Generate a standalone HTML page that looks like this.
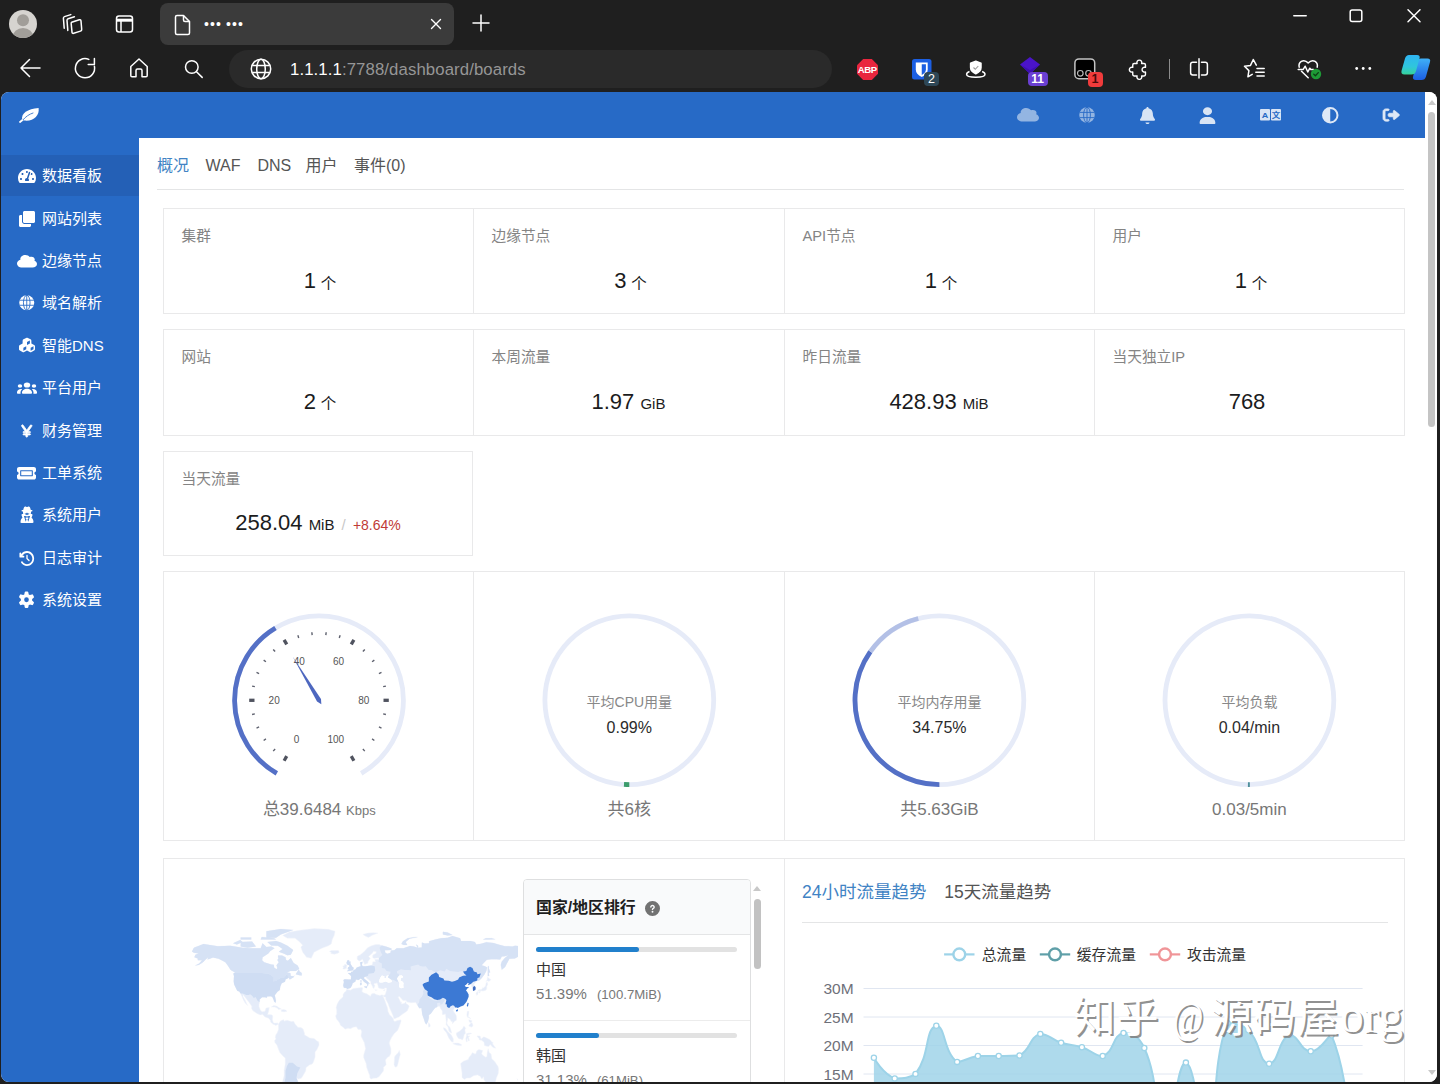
<!DOCTYPE html>
<html lang="zh-CN">
<head>
<meta charset="utf-8">
<title>••• •••</title>
<style>
*{box-sizing:border-box;margin:0;padding:0}
html,body{width:1440px;height:1084px;overflow:hidden;background:#1f1f1f}
body{position:relative;font-family:"Liberation Sans","Noto Sans CJK SC",sans-serif;color:#222;font-size:14px}
.abs{position:absolute}
svg{display:block;overflow:visible}
/* ---------- browser chrome ---------- */
#chrome{position:absolute;left:0;top:0;width:1440px;height:92px;background:#1f1f1f}
#tab{position:absolute;left:159.5px;top:3px;width:294.5px;height:42px;border-radius:8px;background:#3b3b3b}
#addr{position:absolute;left:229px;top:50px;width:603px;height:38px;border-radius:19px;background:#2a2a2a}
#url{position:absolute;left:290px;top:58.8px;font-size:16.75px;line-height:22px;color:#969696;letter-spacing:0.1px;white-space:nowrap}
#url b{font-weight:normal;color:#fff}
.ci{position:absolute}
.badge{position:absolute;color:#fff;font-size:12px;line-height:14px;text-align:center;border-radius:4px;font-weight:bold}
/* ---------- page ---------- */
#page{position:absolute;left:1px;top:92px;width:1436px;height:990px;border-radius:8px;background:#fff;overflow:hidden}
#topbar{position:absolute;left:0;top:0;width:1424px;height:46px;background:#276ac6}
#side{position:absolute;left:0;top:46px;width:138px;height:944px;background:#276ac6}
#side .act{position:absolute;left:0;top:16.5px;width:138px;height:41.7px;background:#2460b6}
.mi{position:absolute;left:41px;font-size:15px;line-height:20px;color:#fff;white-space:nowrap}
.mic{position:absolute;fill:#fff}
#sb{position:absolute;left:1424px;top:0;width:12px;height:990px;background:#fff}
#sb i{position:absolute;left:3px;top:19.5px;width:7px;height:315px;border-radius:4px;background:#c4c4c4}
#sb b{position:absolute;left:2.5px;width:0;height:0;border-left:4px solid transparent;border-right:4px solid transparent}
#sb .up{top:8px;border-bottom:5px solid #c8c8c8}
#sb .dn{top:978px;border-top:5px solid #c8c8c8}
#main{position:absolute;left:138px;top:46px;width:1286px;height:944px;background:#fff;overflow:hidden}
.tabs{position:absolute;left:18px;top:16px;font-size:16px;line-height:24px;color:#555;white-space:nowrap}
.tabs span{position:absolute;top:0}
.hr{position:absolute;height:1px;background:#e4e5e6}
.box{position:absolute;border:1px solid #e9e9ea;background:#fff}
.vl{position:absolute;width:1px;background:#e9e9ea}
.lab{position:absolute;font-size:14.7px;line-height:20px;color:#848484;white-space:nowrap}
.val{position:absolute;text-align:center;font-size:22px;line-height:28px;color:#1b1c1d;white-space:nowrap}
.val small{font-size:15px}
.val .ge{font-size:15.5px;position:relative;top:0.5px}
.val .sl{font-size:15px;color:#c8c8c8;margin:0 1px}
.val .up{font-size:14px;color:#bf3a36}

.rank{position:absolute;border:1px solid #dedfe0;border-radius:4px;background:#fff;overflow:hidden}
.rank .rh{position:absolute;left:0;top:0;width:100%;height:55px;background:#f9fafb;border-bottom:1px solid #e4e5e6}
.rank .rh span{position:absolute;left:12px;top:17px;font-size:15.9px;line-height:22px;font-weight:bold;color:#1f1f1f;white-space:nowrap}
.rank .rr{position:absolute;left:0;width:100%;height:87px;border-top:1px solid #ececec}
.rank .rr:nth-child(3){border-top:none}
.rank .bar{position:absolute;left:12px;top:12px;width:201px;height:5px;border-radius:3px;background:#e2e2e2}
.rank .bar b{position:absolute;left:0;top:0;height:5px;border-radius:3px;background:#2180cc}
.rank .cn{position:absolute;left:12px;top:24.5px;font-size:15px;line-height:20px;color:#333}
.rank .pc{position:absolute;left:12px;top:49px;font-size:15px;line-height:20px;color:#777;white-space:nowrap}
.rank .pc small{font-size:13.2px;margin-left:10px;color:#777}
.isb{position:absolute;width:12px;height:260px}
.isb i{position:absolute;left:2px;top:20px;width:7px;height:70px;border-radius:4px;background:#c2c2c2}
.ctab{position:absolute;font-size:17.5px;line-height:24px;color:#555;white-space:nowrap}
.wm{position:absolute;font-family:"Liberation Serif","Noto Sans CJK SC",sans-serif;font-weight:400;font-size:42px;line-height:50px;color:#fff;text-shadow:2px 2px .6px rgba(125,125,125,.85);white-space:nowrap;letter-spacing:1.1px}
.wm .at{font-size:37px;margin-right:4px;display:inline-block;transform:scale(.9,1.22);transform-origin:50% 75%}
.wm .org{font-size:48px;letter-spacing:0}
</style>
</head>
<body>
<div id="chrome">
  <div id="tab"></div>
  <div id="addr"></div>
  <div id="url"><b>1.1.1.1</b>:7788/dashboard/boards</div>
  <!-- avatar -->
  <svg class="ci" style="left:9px;top:10px" width="28" height="28" viewBox="0 0 28 28"><defs><clipPath id="avc"><circle cx="14" cy="14" r="14"/></clipPath></defs><circle cx="14" cy="14" r="14" fill="#d6d4d0"/><g clip-path="url(#avc)" fill="#a19e99"><circle cx="14" cy="10.2" r="6"/><ellipse cx="14" cy="27.5" rx="10.5" ry="9.5"/></g></svg>
  <!-- workspaces -->
  <svg class="ci" style="left:61px;top:12px" width="24" height="24" viewBox="0 0 24 24" fill="none" stroke="#fff" stroke-width="1.5" stroke-linejoin="round" stroke-linecap="round"><path d="M3.2 16.2 L2.4 6.3 Q2.3 5 3.5 4.6 L9.8 2.6"/><path d="M6.8 18.4 L6 8.4 Q5.900 7.100 7.100 6.700 L13.400 4.700"/><path d="M10.700 10.300 L18.300 7.800 Q19.900 7.300 20 9 L20.700 17.300 Q20.800 18.700 19.500 19.100 L12.700 21.300 Q11.100 21.800 11 20.100 L10.200 11.700 Q10.100 10.500 10.700 10.300Z"/></svg>
  <!-- tab actions -->
  <svg class="ci" style="left:115px;top:14px" width="19" height="20" viewBox="0 0 19 20" fill="none" stroke="#fff" stroke-width="1.5"><rect x="1.5" y="2" width="16" height="16" rx="2.5"/><path d="M1.5 6.200H17.500" stroke-width="3"/><path d="M6 6V18"/></svg>
  <!-- page icon -->
  <svg class="ci" style="left:174px;top:14px" width="17" height="22" viewBox="0 0 17 22" fill="none" stroke="#fff" stroke-width="1.5" stroke-linejoin="round"><path d="M3 1.500H9.500L15.500 7.500V19Q15.500 20.500 14 20.500H3Q1.500 20.500 1.500 19V3Q1.500 1.500 3 1.500Z"/><path d="M9.500 1.500V6Q9.500 7.500 11 7.500H15.500"/></svg>
  <div class="ci" style="left:204px;top:12px;width:44px;height:24px;color:#fff;font-size:14px;line-height:24px;letter-spacing:1.1px;word-spacing:-1px;white-space:nowrap">••• •••</div>
  <!-- close x -->
  <svg class="ci" style="left:430px;top:18px" width="12" height="12" viewBox="0 0 12 12" stroke="#fff" stroke-width="1.400" stroke-linecap="round"><path d="M1.500 1.500L10.500 10.500M10.500 1.500L1.500 10.500"/></svg>
  <!-- plus -->
  <svg class="ci" style="left:472px;top:14px" width="18" height="18" viewBox="0 0 18 18" stroke="#fff" stroke-width="1.500" stroke-linecap="round"><path d="M9 1V17M1 9H17"/></svg>
  <!-- window controls -->
  <svg class="ci" style="left:1293px;top:9px" width="14" height="14" viewBox="0 0 14 14" stroke="#fff" stroke-width="1.500" stroke-linecap="round"><path d="M.8 6.800H13.200"/></svg>
  <svg class="ci" style="left:1349px;top:9px" width="14" height="14" viewBox="0 0 14 14" fill="none" stroke="#fff" stroke-width="1.500"><rect x="1.200" y="1" width="11.600" height="11.600" rx="2"/></svg>
  <svg class="ci" style="left:1407px;top:9px" width="14" height="14" viewBox="0 0 14 14" stroke="#fff" stroke-width="1.500" stroke-linecap="round"><path d="M1 .8L13 12.800M13 .8L1 12.800"/></svg>
  <!-- nav -->
  <svg class="ci" style="left:19px;top:57px" width="22" height="22" viewBox="0 0 22 22" fill="none" stroke="#fff" stroke-width="1.500" stroke-linecap="round" stroke-linejoin="round"><path d="M21 11H2M10.500 2.500L2 11L10.500 19.500"/></svg>
  <svg class="ci" style="left:74px;top:57px" width="22" height="22" viewBox="0 0 22 22" fill="none" stroke="#fff" stroke-width="1.500" stroke-linecap="round" stroke-linejoin="round"><path d="M20.400 9.200A9.600 9.600 0 1 1 14.800 2.400"/><path d="M14.200 7.600H20.400V1.400"/></svg>
  <svg class="ci" style="left:129px;top:57px" width="20" height="22" viewBox="0 0 20 22" fill="none" stroke="#fff" stroke-width="1.500" stroke-linejoin="round"><path d="M1.800 9.500L10 2L18.200 9.500V18.500Q18.200 19.800 17 19.800H13V13.500Q13 12 11.500 12H8.500Q7 12 7 13.500V19.800H3Q1.800 19.800 1.800 18.500Z"/></svg>
  <svg class="ci" style="left:184px;top:59px" width="20" height="20" viewBox="0 0 20 20" fill="none" stroke="#fff" stroke-width="1.500" stroke-linecap="round"><circle cx="7.800" cy="8" r="6.300"/><path d="M12.500 12.700L18.200 18.400"/></svg>
  <svg class="ci" style="left:250px;top:58px" width="22" height="22" viewBox="0 0 22 22" fill="none" stroke="#fff" stroke-width="1.500"><circle cx="11" cy="11" r="9.700"/><ellipse cx="11" cy="11" rx="4.300" ry="9.700"/><path d="M2.200 7.500H19.800M2.200 14.500H19.800"/></svg>
  <!-- ABP -->
  <svg class="ci" style="left:856.500px;top:58.500px" width="21" height="21" viewBox="0 0 21 21"><path d="M6.200 0H14.800L21 6.200V14.800L14.800 21H6.200L0 14.800V6.200Z" fill="#e9263e"/><text x="10.300" y="14" font-size="9.600" font-weight="bold" fill="#fff" text-anchor="middle" font-family="Liberation Sans, sans-serif" letter-spacing="-.4">ABP</text></svg>
  <!-- bitwarden -->
  <svg class="ci" style="left:911.500px;top:58.500px" width="20" height="21" viewBox="0 0 20 21"><rect x="0" y="0" width="19.500" height="20.500" rx="2.500" fill="#1c5fe2"/><path d="M3.800 3.500H15.700V10.500Q15.700 15 9.750 18Q3.800 15 3.800 10.500Z" fill="#fff"/><path d="M9.750 5.300H13.900V10.500Q13.900 13.600 9.750 16Z" fill="#1c5fe2"/></svg>
  <div class="badge" style="left:924px;top:71.500px;width:15px;height:14.500px;background:#2e4756;font-weight:normal;font-size:12.500px;line-height:14.500px">2</div>
  <!-- shield ring -->
  <svg class="ci" style="left:964px;top:58px" width="24" height="22" viewBox="0 0 24 22" fill="none" stroke="#fff" stroke-width="1.500"><path d="M11.800 3.200L17 5.200V9.500Q17 13.500 11.800 15.800Q6.600 13.500 6.600 9.500V5.200Z" fill="#fff" stroke-linejoin="round"/><path d="M9.500 9.500L11.300 11.300L14.300 8" stroke="#9a9a9a" stroke-width="1.100"/><path d="M5.500 13.500Q2.600 14.600 2.600 16.200Q2.600 19.200 11.800 19.200Q21 19.200 21 16.200Q21 14.600 18.100 13.500"/></svg>
  <!-- purple diamond -->
  <svg class="ci" style="left:1019px;top:56px" width="22" height="20" viewBox="0 0 22 20"><path d="M11 1L21 8.500L11 18L1 8.500Z" fill="#4a14c8"/><path d="M1 8.500L11 14L21 8.500L11 18Z" fill="#3d0fb0"/></svg>
  <div class="badge" style="left:1027.500px;top:72px;width:20px;height:14px;background:#6a3fd2;font-size:12px;line-height:14px">11</div>
  <!-- black square ext -->
  <svg class="ci" style="left:1074px;top:58px" width="22" height="22" viewBox="0 0 22 22" fill="none"><rect x=".9" y=".9" width="19.800" height="19.800" rx="4" fill="#000" stroke="#c4c4c4" stroke-width="1.500"/><circle cx="6.300" cy="15.300" r="2.800" stroke="#b8b8b8" stroke-width="1.200"/><circle cx="14.500" cy="15.300" r="2.800" stroke="#b8b8b8" stroke-width="1.200"/></svg>
  <div class="badge" style="left:1087.500px;top:72px;width:15px;height:14.500px;background:#f03b3b;color:#4a0a0a;font-size:12.500px;line-height:14.500px">1</div>
  <!-- puzzle -->
  <svg class="ci" style="left:1128.300px;top:58.600px" width="20.800" height="21.700" viewBox="0 0 22 23" fill="none" stroke="#fff" stroke-width="1.500" stroke-linejoin="round"><path d="M6.500 4.800H9.600A2.600 2.600 0 1 1 14.400 4.800H17Q18.500 4.800 18.500 6.300V8.900A2.600 2.600 0 1 0 18.500 13.700V16.500Q18.500 18 17 18H14.400A2.600 2.600 0 1 1 9.600 18H6.500Q5 18 5 16.500V13.700A2.600 2.600 0 1 1 5 8.900V6.300Q5 4.800 6.500 4.800Z"/></svg>
  <div class="ci" style="left:1168.500px;top:59px;width:1px;height:20px;background:#8c8c8c"></div>
  <!-- split -->
  <svg class="ci" style="left:1188px;top:57px" width="22" height="22" viewBox="0 0 22 22" fill="none" stroke="#fff" stroke-width="1.500" stroke-linecap="round"><path d="M8.500 5.200H4.800Q2.600 5.200 2.600 7.400V15.800Q2.600 18 4.800 18H8.500M13.500 5.200H17.200Q19.400 5.200 19.400 7.400V15.800Q19.400 18 17.200 18H13.500M11 1.800V21"/></svg>
  <!-- favorites -->
  <svg class="ci" style="left:1243px;top:57px" width="23" height="23" viewBox="0 0 23 23" fill="none" stroke="#fff" stroke-width="1.500" stroke-linecap="round" stroke-linejoin="round"><path d="M13.300 8.200L10.300 2.500L7.500 8.400L1.500 9.300L5.900 13.600L4.900 19.800L9.200 17.400"/><path d="M14 11.400H21.200M12.800 15.200H21.200M14 19H21.200"/></svg>
  <!-- heart -->
  <svg class="ci" style="left:1297px;top:58px" width="24" height="22" viewBox="0 0 24 22" fill="none" stroke="#fff" stroke-width="1.500" stroke-linecap="round" stroke-linejoin="round"><path d="M2.200 9.200Q1.300 5.200 4.300 3.300Q8 1.400 11.200 5Q14.400 1.400 18.100 3.300Q21.100 5.200 20.200 9.200M4.500 13.200L11.200 19.800"/><path d="M1.200 11.400H6.200L8.200 8.200L10.800 14L12.800 10.200L13.800 11.400H16.500"/><circle cx="19" cy="16" r="5.200" fill="#1e9a36" stroke="none"/><path d="M16.700 16.100L18.400 17.800L21.300 14.600" stroke="#0c3d14" stroke-width="1.300"/></svg>
  <svg class="ci" style="left:1354px;top:66px" width="18" height="5" viewBox="0 0 18 5" fill="#fff"><circle cx="2.700" cy="2.500" r="1.400"/><circle cx="9.200" cy="2.500" r="1.400"/><circle cx="15.800" cy="2.500" r="1.400"/></svg>
  <!-- copilot -->
  <svg class="ci" style="left:1400px;top:54px" width="32" height="28" viewBox="0 0 32 28"><defs><linearGradient id="cp1" x1="0" y1="0" x2="0" y2="1"><stop offset="0" stop-color="#2fb4f2"/><stop offset=".6" stop-color="#2fc6dc"/><stop offset="1" stop-color="#36d39a"/></linearGradient><linearGradient id="cp2" x1="0" y1="0" x2="0" y2="1"><stop offset="0" stop-color="#3fb0f7"/><stop offset="1" stop-color="#1c5fe4"/></linearGradient></defs><path d="M14.500 2.500H21Q24.500 2.500 23.500 6L19.500 20.500Q18.500 24 15 24H9.500Q5.500 24 6.700 20L10.500 6Q11.500 2.500 14.500 2.500Z" fill="url(#cp2)" transform="translate(6.500 2)"/><path d="M9 1H17Q20.500 1 19.500 4.500L16 17Q15 20.500 11.500 20.500H4.500Q.5 20.500 1.600 16.500L5 4.500Q6 1 9 1Z" fill="url(#cp1)"/></svg>
</div>
<div id="page">
<div id="topbar">
<svg class="abs" style="left:18.2px;top:14.799999999999997px" width="20.500" height="16" viewBox="0 0 20.500 16"><path d="M3.200 12.600C1.800 6.500 8.500 1.800 19.600 1C20.800 8.600 14.200 14.800 5.200 13.600Z" fill="#fff"/><path d="M1 15L3.800 12.800" stroke="#fff" stroke-width="1.800" stroke-linecap="round"/><path d="M4 12.800C7 9.500 10 7.300 14 6" stroke="#4b83d0" stroke-width="1" fill="none" stroke-linecap="round"/></svg>
<svg class="abs" style="left:1015.5px;top:15.2px" width="22" height="15.5" viewBox="0 0 576 512" preserveAspectRatio="none" opacity="0.5"><path fill="#fff" d="M0 336c0 79.5 64.5 144 144 144h304c70.7 0 128-57.3 128-128 0-51.6-30.5-96.1-74.5-116.3 6.7-13.1 10.5-28 10.5-43.7 0-53-43-96-96-96-17.7 0-34.2 4.8-48.4 13.1C343.5 63.3 295.4 32 240 32 160.5 32 96 96.5 96 176c0 8 .7 15.9 1.9 23.5C41 218.7 0 272.6 0 336"/></svg>
<svg class="abs" style="left:1078.0px;top:15.0px" width="16" height="16" viewBox="-8 -8 16 16" opacity="0.5"><circle r="7.750" fill="#fff"/><g fill="none" stroke="#276ac6" stroke-width=".9"><ellipse rx="3.400" ry="7.750"/><path d="M0 -8V8M-7.400 -2.600H7.400M-7.400 2.600H7.400"/></g></svg>
<svg class="abs" style="left:1138.5px;top:14.5px" width="15" height="17" viewBox="0 0 448 512" preserveAspectRatio="none" opacity="0.82"><path fill="#fff" d="M224 0c-17.7 0-32 14.3-32 32v3.2C119 50 64 114.6 64 192v21.7c0 48.1-16.4 94.8-46.4 132.4l-9.8 12.2C2.7 364.6 0 372.4 0 380.5 0 400.1 15.9 416 35.5 416h376.9c19.6 0 35.5-15.9 35.5-35.5 0-8.1-2.7-15.9-7.8-22.2l-9.8-12.2c-29.9-37.6-46.3-84.3-46.3-132.4V192c0-77.4-55-142-128-156.8V32c0-17.7-14.3-32-32-32m-62 464c7.1 27.6 32.2 48 62 48s54.9-20.4 62-48z"/></svg>
<svg class="abs" style="left:1197.5px;top:14.5px" width="17" height="17" viewBox="0 0 448 512" preserveAspectRatio="none" opacity="0.82"><path fill="#fff" d="M224 248a120 120 0 1 0 0-240 120 120 0 1 0 0 240m-29.7 56C95.8 304 16 383.8 16 482.3c0 16.4 13.3 29.7 29.7 29.7h356.6c16.4 0 29.7-13.3 29.7-29.7 0-98.5-79.8-178.3-178.3-178.3z"/></svg>
<svg class="abs" style="left:1258.5px;top:17.3px" width="21" height="11.5" viewBox="0 0 21 13" preserveAspectRatio="none"><rect x="0" y="0" width="10" height="13" rx="1" fill="#fff" opacity=".82"/><rect x="11" y="0" width="10" height="13" rx="1" fill="#fff" opacity=".82"/><text x="5" y="10" font-size="9" font-weight="bold" text-anchor="middle" fill="#276ac6" font-family="Liberation Sans, sans-serif">A</text><text x="16" y="10.2" font-size="8.5" text-anchor="middle" fill="#276ac6" font-family="Liberation Sans, Noto Sans CJK SC, sans-serif" font-weight="bold">文</text></svg>
<svg class="abs" style="left:1320.8px;top:14.8px" width="16.5" height="16.5" viewBox="0 0 512 512" preserveAspectRatio="none" opacity="0.85"><path fill="#fff" d="M448 256c0-106-86-192-192-192v384c106 0 192-86 192-192M0 256a256 256 0 1 1 512 0 256 256 0 1 1-512 0"/></svg>
<svg class="abs" style="left:1382.3px;top:16.0px" width="16.500" height="14" viewBox="0 0 512 512" preserveAspectRatio="none" opacity=".85"><path fill="#fff" stroke="#fff" stroke-width="26" stroke-linejoin="round" d="M505 273c9.4-9.4 9.4-24.6 0-33.9L361 95c-6.9-6.9-17.2-8.9-26.2-5.2S320 102.3 320 112v80H208c-26.5 0-48 21.5-48 48v32c0 26.5 21.5 48 48 48h112v80c0 9.7 5.8 18.5 14.8 22.2s19.3 1.7 26.2-5.2zM160 96c17.7 0 32-14.3 32-32s-14.3-32-32-32H96C43 32 0 75 0 128v256c0 53 43 96 96 96h64c17.7 0 32-14.3 32-32s-14.3-32-32-32H96c-17.7 0-32-14.3-32-32V128c0-17.7 14.3-32 32-32z"/></svg>
</div>
<div id="side"><div class="act"></div>
<svg class="abs" style="left:16.5px;top:30.0px" width="18" height="16" viewBox="0 0 576 512" preserveAspectRatio="none"><path fill="#fff" d="M288 32C128.94 32 0 160.94 0 320c0 52.8 14.25 102.26 39.06 144.8 5.61 9.62 16.3 15.2 27.44 15.2h443c11.14 0 21.83-5.58 27.44-15.2C561.75 422.26 576 372.8 576 320c0-159.06-128.94-288-288-288zm0 64c14.71 0 26.58 10.13 30.32 23.65-1.11 2.26-2.64 4.23-3.45 6.67l-9.22 27.67c-5.13 3.49-10.97 6.01-17.64 6.01-17.67 0-32-14.33-32-32S270.33 96 288 96zM96 384c-17.67 0-32-14.33-32-32s14.33-32 32-32 32 14.33 32 32-14.33 32-32 32zm48-160c-17.67 0-32-14.33-32-32s14.33-32 32-32 32 14.33 32 32-14.33 32-32 32zm246.77-72.41l-61.33 184C343.13 347.33 352 364.54 352 384c0 11.72-3.38 22.55-8.88 32H232.88c-5.5-9.45-8.88-20.28-8.88-32 0-33.94 26.5-61.43 59.9-63.59l61.34-184.01c4.17-12.56 17.73-19.45 30.36-15.17 12.57 4.19 19.35 17.79 15.17 30.36zm14.66 57.2l15.52-46.55c3.47-1.29 7.13-2.23 11.05-2.23 17.67 0 32 14.33 32 32s-14.33 32-32 32c-11.38-.01-20.89-6.28-26.57-15.22zM480 384c-17.67 0-32-14.33-32-32s14.33-32 32-32 32 14.33 32 32-14.33 32-32 32z"/></svg>
<div class="mi" style="top:28.4px">数据看板</div>
<svg class="abs" style="left:18.0px;top:72.5px" width="16" height="16" viewBox="0 0 512 512"><path fill="#fff" d="M464 0c26.51 0 48 21.49 48 48v288c0 26.51-21.49 48-48 48H176c-26.51 0-48-21.49-48-48V48c0-26.51 21.49-48 48-48h288M176 416c-44.112 0-80-35.888-80-80V128H48c-26.51 0-48 21.49-48 48v288c0 26.51 21.49 48 48 48h288c26.51 0 48-21.49 48-48v-48H176z"/></svg>
<div class="mi" style="top:70.9px">网站列表</div>
<svg class="abs" style="left:16.0px;top:115.8px" width="20" height="14.5" viewBox="0 0 576 512" preserveAspectRatio="none"><path fill="#fff" d="M0 336c0 79.5 64.5 144 144 144h304c70.7 0 128-57.3 128-128 0-51.6-30.5-96.1-74.5-116.3 6.7-13.1 10.5-28 10.5-43.7 0-53-43-96-96-96-17.7 0-34.2 4.8-48.4 13.1C343.5 63.3 295.4 32 240 32 160.5 32 96 96.5 96 176c0 8 .7 15.9 1.9 23.5C41 218.7 0 272.6 0 336"/></svg>
<div class="mi" style="top:113.4px">边缘节点</div>
<svg class="abs" style="left:17.8px;top:157.2px" width="15.5" height="15.5" viewBox="-8 -8 16 16"><circle r="7.750" fill="#fff"/><g fill="none" stroke="#276ac6" stroke-width=".9"><ellipse rx="3.400" ry="7.750"/><path d="M0 -8V8M-7.400 -2.600H7.400M-7.400 2.600H7.400"/></g></svg>
<div class="mi" style="top:155.4px">域名解析</div>
<svg class="abs" style="left:18.0px;top:200.2px" width="16" height="14.5" viewBox="0 0 512 512" preserveAspectRatio="none"><path fill="#fff" d="M284-1.3c-17.3-10-38.7-10-56 0l-84.2 48.6c-17.3 10-28 28.5-28 48.5v101.9l-88.3 51c-17.3 10-28 28.5-28 48.5v97.3c0 20 10.7 38.5 28 48.5l84.3 48.6c17.3 10 38.7 10 56 0l88.3-51 88.3 51c17.3 10 38.7 10 56 0l84.1-48.6c17.3-10 28-28.5 28-48.5v-97.3c0-20-10.7-38.5-28-48.5l-88.3-51V95.8c0-20-10.7-38.5-28-48.5zm-52 293.9v106.5l-88.3 51c-1.2.7-2.6 1.1-4 1.1V345.9zm231.4.6c.7 1.2 1.1 2.6 1.1 4v97.3c0 2.9-1.5 5.5-4 6.9L376.2 450c-1.2.7-2.6 1.1-4 1.1V345.8zM348.3 95.8v101.9L256 251V144.5l91.2-52.6c.7 1.2 1.1 2.6 1.1 4z"/></svg>
<div class="mi" style="top:197.9px">智能DNS</div>
<svg class="abs" style="left:16.0px;top:243.8px" width="20" height="12.5" viewBox="0 0 640 512" preserveAspectRatio="none"><path fill="#fff" d="M320 16a104 104 0 1 1 0 208 104 104 0 1 1 0-208M96 88a72 72 0 1 1 0 144 72 72 0 1 1 0-144M0 416c0-70.7 57.3-128 128-128 12.8 0 25.2 1.9 36.9 5.4C132 330.2 112 378.8 112 432v16c0 11.4 2.4 22.2 6.7 32H32c-17.7 0-32-14.3-32-32zm521.3 64c4.3-9.8 6.7-20.6 6.7-32v-16c0-53.2-20-101.8-52.9-138.6 11.7-3.5 24.1-5.4 36.9-5.4 70.7 0 128 57.3 128 128v32c0 17.7-14.3 32-32 32zM472 160a72 72 0 1 1 144 0 72 72 0 1 1-144 0M160 432c0-88.4 71.6-160 160-160s160 71.6 160 160v16c0 17.7-14.3 32-32 32H192c-17.7 0-32-14.3-32-32z"/></svg>
<div class="mi" style="top:240.4px">平台用户</div>
<svg class="abs" style="left:19.8px;top:286.0px" width="11.5" height="14" viewBox="0 0 384 512" preserveAspectRatio="none"><path fill="#fff" stroke="#fff" stroke-width="26" d="M74.9 46.7c-9.6-14.9-29.4-19.2-44.2-9.6s-19.2 29.3-9.6 44.2L143.7 272H88c-13.3 0-24 10.7-24 24s10.7 24 24 24h72v32H88c-13.3 0-24 10.7-24 24s10.7 24 24 24h72v48c0 17.7 14.3 32 32 32s32-14.3 32-32v-48h72c13.3 0 24-10.7 24-24s-10.7-24-24-24h-72v-32h72c13.3 0 24-10.7 24-24s-10.7-24-24-24h-55.7L362.9 81.3c9.6-14.9 5.3-34.7-9.6-44.2s-34.7-5.3-44.2 9.6L192 228.8z"/></svg>
<div class="mi" style="top:283.4px">财务管理</div>
<svg class="abs" style="left:16.0px;top:326.8px" width="19" height="16.5" viewBox="0 0 576 512" preserveAspectRatio="none"><path fill="#fff" fill-rule="evenodd" d="M0 128c0-35.3 28.7-64 64-64h448c35.3 0 64 28.7 64 64v64c0 8.8-7.4 15.7-15.7 18.6C541.5 217.1 528 235 528 256s13.5 38.9 32.3 45.4c8.3 2.9 15.7 9.8 15.7 18.6v64c0 35.3-28.7 64-64 64H64c-35.3 0-64-28.7-64-64v-64c0-8.8 7.4-15.7 15.7-18.6C34.5 294.9 48 277 48 256s-13.5-38.9-32.3-45.4C7.4 207.7 0 200.8 0 192zM128 192v128h320V192zM96 176c0-8.8 7.2-16 16-16h352c8.8 0 16 7.200 16 16v160c0 8.800-7.200 16-16 16H112c-8.800 0-16-7.200-16-16z"/></svg>
<div class="mi" style="top:325.4px">工单系统</div>
<svg class="abs" style="left:18.5px;top:369.0px" width="14" height="16" viewBox="0 0 448 512" preserveAspectRatio="none"><path fill="#fff" d="M171-16c-36.4 0-57.8 58.3-68.3 112H72c-13.3 0-24 10.7-24 24s10.7 24 24 24h24v32c0 17 3.3 33.2 9.3 48H75.5C60.3 224 48 236.3 48 251.5c0 3 .5 5.9 1.4 8.7l28.9 86.6C40.2 379.6 16 428.1 16 482.3c0 16.4 13.3 29.7 29.7 29.7h356.6c16.4 0 29.7-13.3 29.7-29.7 0-54.2-24.2-102.7-62.3-135.4l28.9-86.6c.9-2.8 1.4-5.7 1.4-8.7 0-15.2-12.3-27.5-27.5-27.5h-29.8c6-14.8 9.3-31 9.3-48v-32h24c13.3 0 24-10.7 24-24s-10.7-24-24-24h-30.7c-10.4-53.7-31.9-112-68.3-112-9.6 0-19 3.9-27.5 8.2C241.3-3.6 231.1.1 224 .1s-17.3-3.7-25.5-7.8C190-12.1 180.6-16 171-16m93.7 484.4-24.8-70.9 27.9-32.5c2.7-3.2 4.2-7.2 4.2-11.4 0-9.7-7.8-17.5-17.5-17.5h-61c-9.7 0-17.5 7.8-17.5 17.5 0 4.2 1.5 8.2 4.2 11.4l27.9 32.5-24.8 70.9-57-180.4H162c18.4 10.2 39.5 16 62 16s43.6-5.8 62-16h35.7zM224 256c-34.7 0-64.2-22.1-75.3-53 5.7 3.2 12.3 5 19.3 5h12.4c16.5 0 31.1-10.6 36.3-26.2 2.3-7 12.2-7 14.5 0 5.2 15.6 19.9 26.2 36.3 26.2h12.4c7 0 13.6-1.8 19.3-5-11.1 30.9-40.6 53-75.3 53z"/></svg>
<div class="mi" style="top:367.4px">系统用户</div>
<svg class="abs" style="left:17.7px;top:412.5px" width="16" height="15" viewBox="0 0 576 512" preserveAspectRatio="none"><path fill="#fff" d="M288 64c106 0 192 86 192 192s-86 192-192 192c-65.2 0-122.9-32.5-157.6-82.3-10.1-14.5-30.1-18-44.6-7.9s-18 30.1-7.9 44.6C124.1 468.6 201 512 288 512c141.4 0 256-114.6 256-256S429.4 0 288 0C202.3 0 126.5 42.1 80 106.7V80c0-17.7-14.3-32-32-32S16 62.3 16 80v112c0 17.7 14.3 32 32 32h112.1c17.7 0 32-14.3 32-32s-14.3-32-32-32h-38.3C154.9 102.6 217 64 288 64m24 88c0-13.3-10.7-24-24-24s-24 10.7-24 24v104c0 6.4 2.5 12.5 7 17l72 72c9.4 9.4 24.6 9.4 33.9 0s9.4-24.6 0-33.9l-65-65V152z"/></svg>
<div class="mi" style="top:410.4px">日志审计</div>
<svg class="abs" style="left:18.2px;top:454.2px" width="15" height="15.5" viewBox="0 0 512 512" preserveAspectRatio="none"><path fill="#fff" d="M195.1 9.5c3-14.8 16.1-25.5 31.3-25.5h59.8c15.2 0 28.3 10.7 31.3 25.5l14.5 70c14.1 6 27.3 13.7 39.3 22.8l67.8-22.5c14.4-4.8 30.2 1.2 37.8 14.4l29.9 51.8c7.6 13.2 4.9 29.8-6.5 39.9L447 233.3c.9 7.4 1.3 15 1.3 22.7s-.5 15.3-1.3 22.7l53.4 47.5c11.4 10.1 14 26.8 6.5 39.9L477 417.9c-7.6 13.1-23.4 19.2-37.8 14.4l-67.8-22.5c-12.1 9.1-25.3 16.7-39.3 22.8l-14.4 69.9c-3.1 14.9-16.2 25.5-31.3 25.5h-59.8c-15.2 0-28.3-10.7-31.3-25.5l-14.4-69.9c-14.1-6-27.2-13.7-39.3-22.8l-68.1 22.5c-14.4 4.8-30.2-1.2-37.8-14.4L5.8 366.1c-7.6-13.2-4.9-29.8 6.5-39.9l53.4-47.5c-.9-7.4-1.3-15-1.3-22.7s.5-15.3 1.3-22.7l-53.4-47.5C.9 175.7-1.7 159 5.8 145.9l29.9-51.8c7.6-13.2 23.4-19.2 37.8-14.4l67.8 22.5c12.1-9.1 25.3-16.7 39.3-22.8zM256.3 336a80 80 0 1 0-.6-160 80 80 0 1 0 .6 160"/></svg>
<div class="mi" style="top:452.4px">系统设置</div>
</div>
<div id="main">
<div class="tabs">
<span style="left:0.0px;color:#4183c4">概况</span>
<span style="left:48.5px">WAF</span>
<span style="left:100.5px">DNS</span>
<span style="left:148.5px">用户</span>
<span style="left:197.0px">事件(0)</span>
</div>
<div class="hr" style="left:18px;top:51px;width:1247px"></div>
<div class="box" style="left:24.0px;top:70.0px;width:1242.0px;height:106.0px"></div>
<div class="box" style="left:24.0px;top:191.0px;width:1242.0px;height:107.0px"></div>
<div class="box" style="left:24.0px;top:313.0px;width:310.0px;height:105.0px"></div>
<div class="vl" style="left:334.0px;top:71.0px;height:104.0px"></div>
<div class="vl" style="left:645.0px;top:71.0px;height:104.0px"></div>
<div class="vl" style="left:955.0px;top:71.0px;height:104.0px"></div>
<div class="vl" style="left:334.0px;top:192.0px;height:105.0px"></div>
<div class="vl" style="left:645.0px;top:192.0px;height:105.0px"></div>
<div class="vl" style="left:955.0px;top:192.0px;height:105.0px"></div>
<div class="lab" style="left:42.5px;top:87.5px">集群</div>
<div class="val" style="left:24.0px;width:310.0px;top:129.0px;padding-left:4px;word-spacing:-1.5px">1 <span class="ge">个</span></div>
<div class="lab" style="left:352.5px;top:87.5px">边缘节点</div>
<div class="val" style="left:334.0px;width:311.0px;top:129.0px;padding-left:4px;word-spacing:-1.5px">3 <span class="ge">个</span></div>
<div class="lab" style="left:663.5px;top:87.5px">API节点</div>
<div class="val" style="left:645.0px;width:310.0px;top:129.0px;padding-left:4px;word-spacing:-1.5px">1 <span class="ge">个</span></div>
<div class="lab" style="left:973.5px;top:87.5px">用户</div>
<div class="val" style="left:955.0px;width:310.0px;top:129.0px;padding-left:4px;word-spacing:-1.5px">1 <span class="ge">个</span></div>
<div class="lab" style="left:42.5px;top:209.0px">网站</div>
<div class="val" style="left:24.0px;width:310.0px;top:249.5px;padding-left:4px;word-spacing:-1.5px">2 <span class="ge">个</span></div>
<div class="lab" style="left:352.5px;top:209.0px">本周流量</div>
<div class="val" style="left:334.0px;width:311.0px;top:249.5px">1.97 <small>GiB</small></div>
<div class="lab" style="left:663.5px;top:209.0px">昨日流量</div>
<div class="val" style="left:645.0px;width:310.0px;top:249.5px">428.93 <small>MiB</small></div>
<div class="lab" style="left:973.5px;top:209.0px">当天独立IP</div>
<div class="val" style="left:955.0px;width:310.0px;top:249.5px;padding-right:4px">768</div>
<div class="lab" style="left:42.5px;top:331.0px">当天流量</div>
<div class="val" style="left:24.0px;width:310.0px;top:370.5px">258.04 <small>MiB</small> <span class="sl">/</span> <span class="up">+8.64%</span></div>
<div class="box" style="left:24.0px;top:433.0px;width:1242.0px;height:270.0px"></div>
<div class="vl" style="left:334.0px;top:434.0px;height:268.0px"></div>
<div class="vl" style="left:645.0px;top:434.0px;height:268.0px"></div>
<div class="vl" style="left:955.0px;top:434.0px;height:268.0px"></div>
<svg class="abs" style="left:24.0px;top:433.0px" width="1241.0" height="269.0" viewBox="163.0 571 1241.0 269.0" font-family="Liberation Sans, Noto Sans CJK SC, sans-serif">
<path d="M276.80 773.39A84.4 84.4 0 1 1 361.20 773.39" fill="none" stroke="#e6ebf8" stroke-width="4.8" stroke-linecap="butt"/>
<path d="M276.80 773.39A84.4 84.4 0 0 1 275.46 628.00" fill="none" stroke="#5470c6" stroke-width="4.8" stroke-linecap="butt"/>
<path d="M286.75 756.16L284.10 760.75" stroke="#50535f" stroke-width="3.3"/>
<path d="M275.11 749.05L273.23 751.13" stroke="#5e616e" stroke-width="1.4"/>
<path d="M265.93 738.86L263.66 740.50" stroke="#5e616e" stroke-width="1.4"/>
<path d="M259.07 726.98L256.51 728.12" stroke="#5e616e" stroke-width="1.4"/>
<path d="M254.83 713.94L252.09 714.52" stroke="#5e616e" stroke-width="1.4"/>
<path d="M254.50 700.30L249.20 700.30" stroke="#50535f" stroke-width="3.3"/>
<path d="M254.83 686.66L252.09 686.08" stroke="#5e616e" stroke-width="1.4"/>
<path d="M259.07 673.62L256.51 672.48" stroke="#5e616e" stroke-width="1.4"/>
<path d="M265.93 661.74L263.66 660.10" stroke="#5e616e" stroke-width="1.4"/>
<path d="M275.11 651.55L273.23 649.47" stroke="#5e616e" stroke-width="1.4"/>
<path d="M286.75 644.44L284.10 639.85" stroke="#50535f" stroke-width="3.3"/>
<path d="M298.73 637.91L297.86 635.25" stroke="#5e616e" stroke-width="1.4"/>
<path d="M312.14 635.06L311.85 632.27" stroke="#5e616e" stroke-width="1.4"/>
<path d="M325.86 635.06L326.15 632.27" stroke="#5e616e" stroke-width="1.4"/>
<path d="M339.27 637.91L340.14 635.25" stroke="#5e616e" stroke-width="1.4"/>
<path d="M351.25 644.44L353.90 639.85" stroke="#50535f" stroke-width="3.3"/>
<path d="M362.89 651.55L364.77 649.47" stroke="#5e616e" stroke-width="1.4"/>
<path d="M372.07 661.74L374.34 660.10" stroke="#5e616e" stroke-width="1.4"/>
<path d="M378.93 673.62L381.49 672.48" stroke="#5e616e" stroke-width="1.4"/>
<path d="M383.17 686.66L385.91 686.08" stroke="#5e616e" stroke-width="1.4"/>
<path d="M383.50 700.30L388.80 700.30" stroke="#50535f" stroke-width="3.3"/>
<path d="M383.17 713.94L385.91 714.52" stroke="#5e616e" stroke-width="1.4"/>
<path d="M378.93 726.98L381.49 728.12" stroke="#5e616e" stroke-width="1.4"/>
<path d="M372.07 738.86L374.34 740.50" stroke="#5e616e" stroke-width="1.4"/>
<path d="M362.89 749.05L364.77 751.13" stroke="#5e616e" stroke-width="1.4"/>
<path d="M351.25 756.16L353.90 760.75" stroke="#50535f" stroke-width="3.3"/>
<text x="293.8" y="742.9" font-size="10" fill="#555" text-anchor="start">0</text>
<text x="268.6" y="703.9" font-size="10" fill="#555" text-anchor="start">20</text>
<text x="293.8" y="664.9" font-size="10" fill="#555" text-anchor="start">40</text>
<text x="344.2" y="664.9" font-size="10" fill="#555" text-anchor="end">60</text>
<text x="369.4" y="703.9" font-size="10" fill="#555" text-anchor="end">80</text>
<text x="344.2" y="742.9" font-size="10" fill="#555" text-anchor="end">100</text>
<path d="M292.79 656.78L317.03 701.49L321.32 704.16L320.97 699.11Z" fill="#4d67bf"/>
<text x="319.3" y="815" font-size="17" fill="#777" text-anchor="middle">总39.6484 <tspan font-size="13">Kbps</tspan></text>
<circle cx="629.3" cy="700.2" r="84.4" fill="none" stroke="#e6ebf8" stroke-width="4.8"/>
<path d="M629.30 784.60A84.4 84.4 0 0 1 624.00 784.43" fill="none" stroke="#3b9c6c" stroke-width="4.8" stroke-linecap="butt"/>
<text x="629.3" y="706.8" font-size="14" fill="#888" text-anchor="middle">平均CPU用量</text>
<text x="629.3" y="732.5" font-size="16" fill="#2b2b2b" text-anchor="middle">0.99%</text>
<text x="629.3" y="815" font-size="17" fill="#777" text-anchor="middle">共6核</text>
<circle cx="939.4" cy="700.2" r="84.4" fill="none" stroke="#e6ebf8" stroke-width="4.8"/>
<path d="M939.40 784.60A84.4 84.4 0 0 1 870.35 651.67" fill="none" stroke="#5470c6" stroke-width="4.8" stroke-linecap="butt"/>
<path d="M870.35 651.67A84.4 84.4 0 0 1 918.27 618.49" fill="none" stroke="#b3c0e6" stroke-width="4.8" stroke-linecap="butt"/>
<text x="939.4" y="706.8" font-size="14" fill="#888" text-anchor="middle">平均内存用量</text>
<text x="939.4" y="732.5" font-size="16" fill="#2b2b2b" text-anchor="middle">34.75%</text>
<text x="939.4" y="815" font-size="17" fill="#777" text-anchor="middle">共5.63GiB</text>
<circle cx="1249.4" cy="700.2" r="84.4" fill="none" stroke="#e6ebf8" stroke-width="4.8"/>
<path d="M1249.84 784.60A84.4 84.4 0 0 1 1247.93 784.59" fill="none" stroke="#4e8f9b" stroke-width="4.8" stroke-linecap="butt"/>
<text x="1249.4" y="706.8" font-size="14" fill="#888" text-anchor="middle">平均负载</text>
<text x="1249.4" y="732.5" font-size="16" fill="#2b2b2b" text-anchor="middle">0.04/min</text>
<text x="1249.4" y="815" font-size="17" fill="#777" text-anchor="middle">0.03/5min</text>
</svg>
<div class="box" style="left:24.0px;top:720.0px;width:1242.0px;height:300px"></div>
<div class="vl" style="left:645.0px;top:721.0px;height:300px"></div>
<svg class="abs" style="left:41px;top:732px;overflow:hidden" width="338" height="214" viewBox="180 870 338 214">
<path d="M192.0 951.5L193.9 947.7L203.5 944.1L217.8 946.3L230.2 945.8L242.6 947.7L249.3 948.3L260.7 948.3L262.6 943.3L266.4 947.1L271.2 946.4L274.5 948.3L270.3 950.9L268.3 953.4L262.6 957.2L262.1 960.2L264.1 962.3L271.2 964.5L273.8 964.8L274.1 967.6L276.5 969.3L277.4 968.1L276.5 965.3L278.8 962.3L277.4 960.0L278.4 958.5L277.9 955.5L282.0 955.5L285.5 957.2L286.0 959.9L287.9 960.7L290.8 958.1L293.6 963.0L297.6 965.5L299.2 968.7L296.0 971.0L290.3 971.0L287.0 972.5L290.3 973.1L290.8 976.1L294.1 976.3L294.6 975.1L293.6 977.2L289.8 979.4L288.9 977.9L288.4 977.9L285.5 979.4L285.0 981.8L281.7 983.2L280.3 986.5L279.8 990.1L277.4 991.8L274.8 995.2L275.9 1000.7L275.5 1002.8L274.3 1001.8L273.4 999.2L272.2 996.7L270.3 996.3L266.9 996.4L267.0 997.8L265.0 997.3L262.1 997.3L259.6 999.6L259.6 1001.9L259.1 1004.3L259.0 1006.5L260.5 1010.3L262.1 1011.7L265.0 1011.3L266.0 1008.1L269.3 1007.5L268.6 1011.6L267.6 1014.6L271.7 1014.7L272.8 1015.8L272.5 1020.2L273.6 1023.1L276.0 1023.1L277.4 1022.9L278.6 1023.9L278.4 1025.3L277.5 1024.4L275.8 1025.6L274.5 1024.7L273.1 1024.3L270.5 1022.1L270.4 1020.6L268.7 1018.3L265.0 1017.0L262.6 1014.4L260.2 1014.9L257.4 1013.7L253.1 1010.9L251.6 1008.8L251.7 1006.2L249.3 1002.8L247.4 1000.2L244.7 996.7L242.9 994.5L243.1 996.7L245.0 999.9L246.9 1004.1L247.8 1005.6L245.3 1003.3L243.4 999.9L242.1 996.9L240.6 993.5L239.3 991.6L237.2 990.8L235.9 988.0L234.2 984.6L233.7 981.4L234.0 976.1L233.3 973.4L235.4 974.4L235.0 972.5L230.7 970.0L227.8 965.5L225.4 962.3L222.1 960.4L218.7 958.8L213.0 957.5L209.7 958.8L207.5 959.5L208.2 957.2L205.4 959.8L203.0 962.3L198.7 964.9L195.1 965.5L199.2 963.4L202.0 960.3L197.8 960.2L197.8 958.5L194.4 957.2L195.4 954.7L198.7 953.4L193.9 952.7ZM282.7 935.4L289.3 932.1L299.8 930.3L314.1 928.6L328.4 929.3L335.1 931.2L334.2 935.6L332.3 939.4L331.3 943.9L328.4 945.8L321.8 948.3L314.1 952.2L311.3 958.3L306.5 957.2L302.7 952.2L300.8 947.1L302.7 945.2L298.9 941.3L295.1 938.2L287.4 938.2ZM276.0 941.1L280.8 942.6L287.4 945.8L293.2 950.1L290.8 954.7L287.4 955.3L283.6 953.4L278.8 951.8L282.7 949.0L277.9 945.8L271.2 945.5L267.4 942.0ZM240.7 942.0L252.1 941.6L255.9 946.4L247.4 947.7L240.7 946.4ZM266.4 937.5L276.0 937.8L280.8 934.4L293.2 929.9L280.8 929.0L266.4 931.2ZM233.1 943.3L240.2 940.1L242.6 942.0L236.9 944.5ZM260.7 939.4L276.0 939.4L274.1 938.2L261.7 936.9ZM240.7 939.4L251.2 939.4L251.2 937.5L240.7 937.5ZM295.7 974.3L298.9 969.3L299.4 971.2L301.7 973.1L301.7 975.4L299.4 975.2ZM278.6 1023.9L280.3 1021.1L283.6 1019.6L284.1 1021.1L287.0 1020.2L291.2 1021.5L293.6 1021.2L295.1 1024.0L297.9 1027.2L301.0 1027.6L303.2 1029.1L304.6 1033.6L304.6 1035.1L306.5 1035.9L309.8 1038.0L314.1 1038.4L317.0 1040.9L318.7 1041.8L319.1 1045.0L317.0 1049.5L315.1 1052.0L315.1 1057.1L313.4 1062.2L312.2 1064.1L309.4 1065.1L306.0 1067.7L305.8 1070.8L302.7 1076.2L301.3 1078.3L298.4 1079.1L296.5 1078.1L297.9 1081.3L297.0 1083.8L293.2 1084.4L292.9 1086.7L290.3 1087.0L290.3 1089.5L287.9 1093.4L289.5 1095.3L286.5 1099.1L287.1 1101.6L284.6 1103.3L281.2 1101.0L280.3 1095.9L282.2 1090.8L281.9 1085.7L282.5 1081.9L284.1 1075.5L284.1 1070.5L285.2 1064.1L285.2 1058.1L283.1 1056.2L279.8 1052.6L278.7 1050.1L276.9 1045.0L274.8 1042.5L274.7 1040.3L276.0 1039.0L275.2 1037.6L275.8 1034.8L277.1 1032.9L278.4 1029.8L278.4 1025.3ZM343.2 985.6L343.9 987.8L346.3 988.0L347.1 988.9L350.4 988.0L352.0 985.6L352.6 983.3L355.4 981.5L355.9 979.6L358.5 980.0L360.7 978.4L362.1 979.5L364.0 981.8L367.2 984.0L367.4 986.5L368.1 985.5L368.5 983.3L369.9 983.8L367.6 981.5L365.3 979.4L364.0 978.5L364.2 977.0L365.4 976.8L366.1 977.3L366.9 978.6L369.0 980.1L370.8 981.7L370.8 983.6L372.3 986.1L373.0 988.0L374.1 988.4L374.4 986.5L375.2 986.2L374.1 984.6L374.1 983.5L375.2 983.6L377.1 982.9L377.3 983.8L377.7 984.8L378.1 986.0L378.4 987.8L379.3 988.2L381.4 988.7L383.3 988.9L385.2 988.0L386.6 988.0L386.5 990.1L385.7 992.9L385.0 995.0L383.2 995.2L383.4 996.8L385.6 997.3L385.7 999.2L387.9 1003.3L389.5 1007.7L391.4 1011.9L393.1 1015.9L393.8 1018.7L395.2 1018.6L398.8 1017.0L402.1 1014.5L405.0 1012.6L407.4 1010.7L409.3 1006.2L408.2 1004.8L406.2 1003.7L406.0 1001.4L404.5 1003.3L401.5 1004.1L401.5 1001.8L400.8 1002.4L400.2 1001.0L398.3 997.3L399.0 996.3L400.8 998.0L402.9 1000.5L406.0 1000.4L407.0 1002.1L411.0 1002.8L415.7 1002.5L416.6 1004.1L418.0 1006.2L419.4 1008.3L421.5 1007.9L421.8 1010.7L422.3 1014.5L423.7 1018.6L425.1 1022.8L426.2 1024.5L426.9 1023.5L427.9 1021.7L428.8 1018.0L428.8 1015.1L430.8 1013.7L433.4 1010.0L435.3 1007.7L437.2 1007.0L438.6 1006.2L439.9 1006.5L440.4 1008.4L442.3 1010.9L442.3 1014.5L443.3 1014.7L445.4 1013.9L445.8 1017.7L446.3 1022.1L446.1 1024.7L448.0 1027.0L448.9 1031.3L451.0 1033.1L451.7 1033.1L450.9 1029.8L449.8 1027.0L447.7 1025.3L446.9 1023.1L447.7 1019.6L447.8 1017.8L448.7 1018.6L450.4 1019.8L451.1 1021.5L452.3 1021.5L452.5 1023.8L454.2 1021.6L456.5 1020.2L456.6 1017.7L456.1 1015.1L454.4 1012.6L453.2 1010.7L454.1 1008.5L455.3 1007.5L457.0 1007.5L457.7 1008.1L460.6 1006.6L463.4 1005.6L464.9 1003.7L466.5 1001.8L467.7 999.0L468.6 996.8L468.6 994.5L467.1 991.7L466.0 990.4L467.5 988.3L469.2 987.8L467.7 986.9L465.8 987.1L464.7 985.6L465.8 985.0L467.9 982.8L468.8 983.3L467.9 985.2L470.9 984.0L471.7 986.9L472.8 987.8L473.0 991.0L475.4 990.1L475.7 987.8L473.9 984.2L476.0 982.1L477.0 981.0L479.2 980.4L481.6 978.2L484.4 974.4L486.3 971.0L487.1 967.4L484.9 966.2L481.6 965.3L484.4 962.3L486.8 959.8L491.1 959.3L496.8 959.2L500.2 959.4L501.8 956.5L504.9 956.2L508.3 955.3L504.8 957.9L501.7 961.7L500.8 965.1L501.8 969.8L505.1 967.0L506.8 963.6L508.1 961.3L509.4 958.8L514.8 958.5L518.8 956.2L523.5 955.3L524.0 952.2L522.1 952.8L521.6 951.5L524.0 950.3L524.0 947.1L520.2 946.1L515.0 945.8L512.6 946.4L504.9 946.2L498.3 944.5L493.5 943.0L486.3 942.2L481.1 943.8L476.3 944.5L474.9 942.0L470.6 941.1L461.1 941.1L460.1 938.2L452.5 936.0L447.7 937.8L441.0 938.2L435.3 939.4L429.1 941.3L429.1 943.3L424.8 943.5L421.9 942.6L421.8 947.5L418.1 947.8L418.1 945.8L416.0 944.5L417.6 947.7L413.8 946.4L410.0 946.1L404.8 947.7L403.8 948.3L396.7 948.3L394.3 950.3L390.9 950.4L390.5 952.8L387.6 953.7L385.5 952.9L384.7 950.3L391.4 949.9L391.4 948.6L386.6 946.8L381.9 945.4L379.0 944.5L375.7 944.5L371.4 945.8L367.6 947.7L364.7 950.9L362.8 952.8L360.4 954.7L357.3 956.2L357.1 959.2L359.0 961.1L360.4 960.8L362.3 959.2L363.0 960.4L364.2 963.4L364.6 964.4L365.9 964.1L368.0 963.0L368.2 961.3L370.3 958.6L368.7 956.4L372.6 952.9L373.5 951.3L376.4 951.8L375.7 953.4L372.8 955.0L372.6 957.5L374.2 958.6L377.1 958.0L380.4 958.5L379.0 959.2L374.7 959.5L375.5 961.7L372.8 961.7L372.3 964.5L370.9 965.6L365.8 966.2L362.8 966.2L361.8 964.9L362.6 961.7L360.1 962.3L360.5 964.5L360.7 966.2L359.0 966.7L356.8 967.6L355.4 969.6L353.8 970.1L352.3 972.0L351.1 971.7L350.9 972.9L347.8 973.1L349.9 974.7L351.2 976.3L350.9 979.5L348.7 979.5L344.7 979.3L343.4 980.1L343.9 982.1ZM346.7 989.3L350.4 990.2L353.3 988.4L357.1 988.0L361.8 987.4L362.8 988.0L362.0 991.2L363.0 992.6L366.9 993.8L370.4 996.3L371.6 993.8L374.2 993.2L376.2 994.6L380.0 995.5L381.9 994.8L383.2 995.2L383.4 996.8L384.7 999.9L386.2 1004.3L387.6 1008.1L388.0 1011.2L389.7 1015.1L391.6 1016.4L393.5 1018.9L393.5 1020.2L394.8 1021.5L397.1 1020.6L401.1 1019.8L401.0 1021.6L399.0 1027.2L397.6 1030.4L394.3 1033.6L391.9 1037.1L390.0 1040.8L389.3 1043.1L390.0 1045.7L390.9 1048.2L390.9 1053.3L389.5 1056.2L387.4 1057.5L385.5 1060.0L386.2 1064.7L383.6 1067.3L383.6 1070.8L381.7 1073.3L379.0 1076.8L376.6 1078.1L373.3 1078.3L371.4 1079.1L369.9 1078.2L369.7 1075.5L368.0 1071.2L366.6 1067.3L366.1 1063.5L363.7 1057.7L363.6 1055.2L365.5 1048.8L364.2 1042.5L360.9 1035.9L361.6 1031.7L360.9 1029.5L358.0 1029.4L356.4 1026.8L353.4 1027.2L350.4 1028.7L348.0 1028.2L345.1 1029.2L343.4 1027.6L340.4 1025.3L339.6 1023.1L338.0 1020.8L336.4 1019.1L335.6 1016.1L336.6 1013.9L336.7 1010.0L336.1 1007.7L337.0 1004.6L338.5 1001.5L339.9 999.5L341.6 998.2L343.0 996.7L343.0 994.8L344.2 992.5L345.8 991.3ZM399.3 1050.4L400.4 1054.6L399.5 1057.1L397.9 1064.1L397.1 1066.6L395.2 1067.3L394.0 1064.7L394.3 1060.9L394.5 1057.1L395.7 1054.9L397.9 1053.0ZM460.6 1063.5L461.2 1067.9L462.0 1073.0L462.0 1077.5L464.4 1079.4L466.8 1078.1L470.1 1078.0L473.5 1075.8L477.3 1074.9L480.1 1076.2L481.9 1079.1L483.5 1076.8L484.0 1080.0L485.9 1082.5L489.2 1084.2L491.6 1084.4L493.5 1082.9L495.4 1082.2L496.4 1078.1L498.3 1073.6L498.6 1069.2L498.1 1066.6L496.2 1063.8L494.4 1060.9L491.9 1058.9L491.1 1053.9L489.2 1052.6L488.2 1048.6L487.3 1052.0L486.8 1056.7L485.4 1057.1L482.5 1054.9L481.6 1053.7L482.8 1050.5L481.1 1050.1L478.8 1049.5L476.8 1050.7L475.8 1053.8L474.4 1053.7L472.5 1052.6L470.6 1055.6L468.9 1057.6L468.2 1059.6L465.8 1060.3L463.4 1061.2ZM347.1 971.2L349.0 970.9L353.1 970.2L353.7 967.8L352.3 966.8L350.9 964.6L350.4 963.6L350.5 961.6L349.0 961.4L349.2 960.3L347.5 960.3L346.4 963.0L347.7 964.9L349.2 965.1L349.4 966.8L348.0 967.2L348.2 968.4L347.3 968.9L349.2 969.5L348.0 970.0ZM342.8 968.9L344.5 969.1L346.4 968.4L346.6 966.2L347.0 965.4L346.1 964.5L344.4 964.6L344.2 965.8L342.8 965.9L343.4 967.4ZM329.4 951.5L331.3 950.4L335.1 950.6L338.4 950.6L339.3 952.2L338.0 953.2L334.4 954.2L330.8 953.6L331.3 952.4ZM477.2 991.6L478.7 991.2L481.1 990.8L482.8 991.0L484.7 990.7L485.8 990.3L486.7 989.0L486.8 986.1L487.8 984.5L487.3 982.2L486.1 982.7L485.9 984.2L485.4 986.2L483.3 988.0L482.8 987.4L482.0 989.0L481.1 989.6L478.7 989.7ZM485.9 981.4L487.0 979.9L487.5 977.1L489.2 978.6L490.9 979.5L490.6 980.1L488.9 981.4L487.3 980.8ZM476.0 992.9L477.3 991.8L478.1 992.6L477.6 994.9L476.5 995.2ZM478.4 992.2L479.8 991.2L480.8 991.8L479.4 992.9ZM487.8 976.3L489.2 975.7L488.7 972.5L490.2 972.5L489.0 968.7L488.7 965.8L487.8 966.8L487.8 971.2ZM466.9 1005.6L467.7 1002.8L468.6 1003.0L468.2 1005.2L467.5 1006.9ZM456.0 1010.4L457.4 1009.3L458.2 1009.9L457.2 1011.6L456.0 1011.3ZM428.4 1022.5L429.8 1024.0L430.4 1025.9L429.6 1027.1L428.6 1027.2L428.3 1024.7ZM443.2 1027.7L445.3 1028.2L448.2 1032.0L451.2 1034.8L453.4 1038.7L453.2 1042.2L451.5 1041.8L448.7 1038.0L446.6 1032.9L443.9 1029.8ZM452.7 1043.5L455.3 1043.1L458.2 1043.1L461.5 1044.4L461.3 1045.8L457.2 1045.3L453.9 1044.3ZM456.3 1032.9L458.5 1031.7L460.1 1030.8L462.5 1028.5L463.9 1025.9L465.8 1028.2L464.9 1029.8L465.5 1033.6L464.4 1034.2L463.4 1038.0L462.5 1039.9L460.6 1039.0L458.7 1038.7L457.2 1036.7L456.3 1034.5ZM466.3 1033.8L467.7 1033.3L471.1 1032.9L471.6 1033.6L469.5 1034.2L467.3 1034.8L468.2 1036.1L469.8 1035.9L468.5 1037.4L469.5 1040.6L468.2 1040.9L467.7 1038.4L467.1 1038.7L467.2 1042.0L466.3 1041.8L465.8 1038.7L466.6 1035.5ZM477.3 1035.9L480.1 1035.9L481.1 1039.0L483.8 1036.7L486.8 1038.1L490.2 1039.7L491.6 1041.8L493.3 1042.7L492.5 1043.7L495.9 1048.2L493.0 1047.6L490.2 1044.6L488.7 1046.5L486.8 1046.3L484.4 1045.4L484.0 1042.2L481.6 1040.3L479.2 1039.9L479.0 1038.4L477.3 1036.7ZM467.3 1011.3L468.9 1011.3L468.7 1013.9L468.2 1016.4L470.6 1018.3L470.4 1018.9L469.2 1017.7L467.4 1017.3L466.8 1015.1ZM468.7 1025.9L470.1 1023.8L472.0 1022.4L473.0 1025.3L472.0 1027.2L470.6 1026.8ZM468.7 1019.8L470.6 1020.2L472.0 1020.8L471.6 1022.1L470.1 1022.8L469.2 1021.5ZM517.1 1078.7L518.8 1080.6L520.2 1082.5L522.6 1082.8L521.2 1085.1L519.4 1087.6L519.1 1085.5L518.1 1084.8L519.1 1082.5L517.3 1079.4ZM271.3 1007.0L273.6 1005.5L276.5 1006.0L278.8 1007.5L281.5 1009.1L278.4 1009.5L277.9 1008.5L275.0 1007.1ZM281.3 1009.7L283.6 1009.5L285.7 1010.0L287.0 1011.2L284.6 1011.7L283.1 1011.7L281.3 1011.4ZM362.8 934.4L367.6 933.1L373.3 932.7L378.1 933.1L372.3 935.2L368.5 937.4L365.7 936.3ZM401.4 943.9L403.8 944.9L407.2 944.9L405.7 942.0L409.5 938.8L417.6 937.1L415.3 936.9L407.6 938.2L402.9 941.3ZM442.9 934.4L447.7 935.6L452.5 935.0L447.7 932.4L442.9 931.8ZM483.0 939.4L488.7 939.4L495.4 939.2L491.6 938.2L485.9 938.2ZM364.2 986.5L367.1 986.2L366.7 988.2L364.2 987.0ZM360.1 982.7L361.6 982.7L361.5 985.0L360.3 985.2ZM360.5 980.3L361.4 980.3L361.3 982.2L360.6 981.8ZM374.7 989.7L377.3 990.1L375.2 990.4ZM383.1 990.3L385.2 989.6L384.6 990.7Z" fill="#e5ecf9" stroke="#f2f5fb" stroke-width=".5"/>
<path d="M379.0 982.1L380.0 982.4L382.4 982.4L385.7 981.4L388.6 982.7L391.9 981.9L391.4 980.1L389.0 978.2L387.6 977.2L389.0 975.3L386.6 975.7L385.9 977.9L384.3 978.1L384.4 976.3L381.9 975.6L380.6 977.3L379.5 979.5ZM399.0 975.7L401.4 975.3L402.9 976.3L402.9 977.6L401.0 978.2L400.5 980.8L402.4 981.4L403.6 982.9L403.3 985.2L403.6 987.8L401.0 988.2L399.0 987.1L399.0 984.6L399.5 983.3L397.6 980.1L397.1 978.2Z" fill="#fff"/>
<path d="M380.9 946.1L379.5 947.7L380.9 952.2L382.4 955.0L379.0 957.9L379.0 959.2L378.5 961.7L381.9 963.6L381.9 968.1L384.7 968.4L386.6 970.9L390.5 971.7L390.2 974.0L388.7 974.9L387.6 977.2L389.0 978.2L390.5 979.5L393.8 980.1L396.7 981.7L398.6 981.4L397.6 980.1L397.1 978.2L399.0 975.7L398.6 973.8L397.1 973.4L396.9 971.2L401.0 969.3L404.8 970.0L408.1 970.0L411.0 970.2L410.5 966.4L414.3 965.5L418.1 964.5L420.0 965.9L422.9 966.5L425.8 966.2L428.6 970.0L431.5 970.0L433.9 971.7L436.1 972.3L440.1 970.2L444.8 971.5L446.3 968.7L450.1 970.9L454.4 971.5L458.2 972.1L461.5 971.0L463.0 971.5L466.3 970.9L467.5 967.9L470.1 966.8L472.5 968.1L473.9 971.5L477.0 972.6L477.3 974.2L480.8 973.4L479.4 977.6L477.5 977.9L477.3 980.3L477.0 981.0L479.2 980.4L481.6 978.2L484.4 974.4L486.3 971.0L487.1 967.4L484.9 966.2L481.6 965.3L484.4 962.3L486.8 959.8L491.1 959.3L496.8 959.2L500.2 959.4L501.8 956.5L504.9 956.2L508.3 955.3L504.8 957.9L501.7 961.7L500.8 965.1L501.8 969.8L505.1 967.0L506.8 963.6L508.1 961.3L509.4 958.8L514.8 958.5L518.8 956.2L523.5 955.3L524.0 952.2L522.1 952.8L521.6 951.5L524.0 950.3L524.0 947.1L520.2 946.1L515.0 945.8L512.6 946.4L504.9 946.2L498.3 944.5L493.5 943.0L486.3 942.2L481.1 943.8L476.3 944.5L474.9 942.0L470.6 941.1L461.1 941.1L460.1 938.2L452.5 936.0L447.7 937.8L441.0 938.2L435.3 939.4L429.1 941.3L429.1 943.3L424.8 943.5L421.9 942.6L421.8 947.5L418.1 947.8L418.1 945.8L416.0 944.5L417.6 947.7L413.8 946.4L410.0 946.1L404.8 947.7L403.8 948.3L396.7 948.3L394.3 950.3L390.9 950.4L390.5 952.8L387.6 953.7L385.5 952.9L384.7 950.3L391.4 949.9L391.4 948.6L386.6 946.8L381.9 945.4ZM487.8 976.3L489.2 975.7L488.7 972.5L490.2 972.5L489.0 968.7L488.7 965.8L487.8 966.8L487.8 971.2ZM401.4 943.9L403.8 944.9L407.2 944.9L405.7 942.0L409.5 938.8L417.6 937.1L415.3 936.9L407.6 938.2L402.9 941.3ZM442.9 934.4L447.7 935.6L452.5 935.0L447.7 932.4L442.9 931.8ZM483.0 939.4L488.7 939.4L495.4 939.2L491.6 938.2L485.9 938.2ZM235.0 972.5L230.7 970.0L227.8 965.5L225.4 962.3L222.1 960.4L218.7 958.8L213.0 957.5L209.7 958.8L207.5 959.5L208.2 957.2L205.4 959.8L203.0 962.3L198.7 964.9L195.1 965.5L199.2 963.4L202.0 960.3L197.8 960.2L197.8 958.5L194.4 957.2L195.4 954.7L198.7 953.4L193.9 952.7L192.0 951.5L193.9 947.7L203.5 944.1L217.8 946.3L230.2 945.8L242.6 947.7L249.3 948.3L260.7 948.3L262.6 943.3L266.4 947.1L271.2 946.4L274.5 948.3L270.3 950.9L268.3 953.4L262.6 957.2L262.1 960.2L264.1 962.3L271.2 964.5L273.8 964.8L274.1 967.6L276.5 969.3L277.4 968.1L276.5 965.3L278.8 962.3L277.4 960.0L278.4 958.5L277.9 955.5L282.0 955.5L285.5 957.2L286.0 959.9L287.9 960.7L290.8 958.1L293.6 963.0L297.6 965.5L299.2 968.7L296.0 971.0L290.3 971.0L287.0 972.5L290.3 973.1L290.8 976.1L294.1 976.3L294.6 975.1L293.6 977.2L289.8 979.4L288.9 977.9L288.4 977.9L287.6 975.1L286.3 974.5L284.8 977.1L284.1 977.6L280.8 977.6L279.3 979.1L276.9 979.6L276.9 980.4L273.1 981.4L273.7 980.1L273.6 977.2L271.7 975.8L271.4 975.3L268.0 973.4L266.9 973.8L262.1 972.9L261.5 972.5ZM276.0 941.1L280.8 942.6L287.4 945.8L293.2 950.1L290.8 954.7L287.4 955.3L283.6 953.4L278.8 951.8L282.7 949.0L277.9 945.8L271.2 945.5L267.4 942.0ZM240.7 942.0L252.1 941.6L255.9 946.4L247.4 947.7L240.7 946.4ZM266.4 937.5L276.0 937.8L280.8 934.4L293.2 929.9L280.8 929.0L266.4 931.2ZM233.1 943.3L240.2 940.1L242.6 942.0L236.9 944.5ZM260.7 939.4L276.0 939.4L274.1 938.2L261.7 936.9ZM240.7 939.4L251.2 939.4L251.2 937.5L240.7 937.5ZM295.7 974.3L298.9 969.3L299.4 971.2L301.7 973.1L301.7 975.4L299.4 975.2ZM418.0 1006.2L419.4 1008.3L421.5 1007.9L421.8 1010.7L422.3 1014.5L423.7 1018.6L425.1 1022.8L426.2 1024.5L426.9 1023.5L427.9 1021.7L428.8 1018.0L428.8 1015.1L430.8 1013.7L433.4 1010.0L435.3 1007.7L437.2 1007.0L437.2 1003.0L440.1 1002.7L440.5 1004.9L442.5 1003.7L444.8 999.9L442.9 997.7L440.1 999.5L437.2 1000.1L436.3 1001.1L432.4 999.9L429.1 998.0L429.6 996.4L427.7 995.4L427.4 993.5L427.7 991.2L424.8 989.3L422.9 991.0L423.4 993.5L421.9 996.7L419.6 999.2L419.1 1002.4L417.6 1004.6Z" fill="#d6e2f5"/>
<path d="M233.3 973.4L235.0 972.5L261.5 972.5L262.1 972.9L266.9 973.8L268.0 973.4L271.4 975.3L271.7 975.8L273.6 977.2L273.7 980.1L273.1 981.4L276.9 980.4L276.9 979.6L279.3 979.1L280.8 977.6L284.1 977.6L284.8 977.1L286.3 974.5L287.6 975.1L288.4 977.9L285.5 979.4L285.0 981.8L281.7 983.2L280.3 986.5L279.8 990.1L277.4 991.8L274.8 995.2L275.9 1000.7L275.5 1002.8L274.3 1001.8L273.4 999.2L272.2 996.7L270.3 996.3L266.9 996.4L267.0 997.8L265.0 997.3L262.1 997.3L259.6 999.6L259.6 1001.9L257.7 1001.1L255.6 996.9L253.8 998.0L252.3 996.0L250.7 994.4L249.1 994.4L249.1 995.0L246.4 995.0L242.8 993.5L240.6 993.5L239.3 991.6L237.2 990.8L235.9 988.0L234.2 984.6L233.7 981.4L234.0 976.1ZM343.2 985.6L343.9 987.8L346.3 988.0L347.1 988.9L350.4 988.0L352.0 985.6L352.6 983.3L355.4 981.5L355.9 979.6L358.5 980.0L360.7 978.4L362.1 979.5L364.0 981.8L367.2 984.0L367.4 986.5L368.1 985.5L368.5 983.3L369.9 983.8L367.6 981.5L365.3 979.4L364.0 978.5L364.2 977.0L365.4 976.8L368.0 975.7L368.5 973.8L373.8 973.1L375.2 970.6L374.7 966.2L370.9 965.6L365.8 966.2L362.8 966.2L361.8 964.9L362.6 961.7L360.1 962.3L360.5 964.5L360.7 966.2L359.0 966.7L356.8 967.6L355.4 969.6L353.8 970.1L352.3 972.0L351.1 971.7L350.9 972.9L347.8 973.1L349.9 974.7L351.2 976.3L350.9 979.5L348.7 979.5L344.7 979.3L343.4 980.1L343.9 982.1ZM347.1 971.2L349.0 970.9L353.1 970.2L353.7 967.8L352.3 966.8L350.9 964.6L350.4 963.6L350.5 961.6L349.0 961.4L349.2 960.3L347.5 960.3L346.4 963.0L347.7 964.9L349.2 965.1L349.4 966.8L348.0 967.2L348.2 968.4L347.3 968.9L349.2 969.5L348.0 970.0ZM296.5 1078.1L297.9 1081.3L297.0 1083.8L293.2 1084.4L292.9 1086.7L290.3 1087.0L290.3 1089.5L287.9 1093.4L289.5 1095.3L286.5 1099.1L287.1 1101.6L283.6 1099.7L284.1 1092.1L284.1 1084.4L285.5 1078.1L285.5 1071.1L287.0 1066.0L288.9 1062.8L292.7 1062.8L297.0 1066.4L300.3 1067.5L297.3 1073.3L296.5 1078.1ZM364.2 986.5L367.1 986.2L366.7 988.2L364.2 987.0ZM360.1 982.7L361.6 982.7L361.5 985.0L360.3 985.2ZM360.5 980.3L361.4 980.3L361.3 982.2L360.6 981.8Z" fill="#cfddf3"/>
<path d="M379.0 982.1L380.0 982.4L382.4 982.4L385.7 981.4L388.6 982.7L391.9 981.9L391.4 980.1L389.0 978.2L387.6 977.2L389.0 975.3L386.6 975.7L385.9 977.9L384.3 978.1L384.4 976.3L381.9 975.6L380.6 977.3L379.5 979.5ZM399.0 975.7L401.4 975.3L402.9 976.3L402.9 977.6L401.0 978.2L400.5 980.8L402.4 981.4L403.6 982.9L403.3 985.2L403.6 987.8L401.0 988.2L399.0 987.1L399.0 984.6L399.5 983.3L397.6 980.1L397.1 978.2Z" fill="#fff"/>
<path d="M422.5 984.7L423.9 983.3L428.8 981.4L428.9 977.6L431.5 974.8L433.9 973.4L436.1 972.3L438.6 974.4L439.1 977.0L443.4 978.6L444.4 980.5L448.7 980.7L452.0 981.7L454.9 980.9L458.2 979.4L459.1 977.6L463.0 975.7L466.5 975.4L464.4 973.8L463.0 971.5L466.3 970.9L467.5 967.9L470.1 966.8L472.5 968.1L473.9 971.5L477.0 972.6L477.3 974.2L480.8 973.4L479.4 977.6L477.5 977.9L477.3 980.3L476.8 980.8L474.4 981.4L473.3 981.8L470.9 984.0L467.9 985.2L468.8 983.3L467.9 982.8L465.8 985.0L464.7 985.6L465.8 987.1L467.7 986.9L469.2 987.8L467.5 988.3L466.0 990.4L467.1 991.7L468.6 994.5L468.6 996.8L467.7 999.0L466.5 1001.8L464.9 1003.7L463.4 1005.6L460.6 1006.6L457.7 1008.1L457.0 1007.5L455.3 1007.5L454.1 1005.8L452.8 1005.2L450.6 1006.2L449.3 1007.9L447.9 1007.5L446.9 1006.6L446.7 1004.3L445.4 1004.3L446.4 999.9L445.1 998.8L442.9 997.7L440.1 999.5L437.2 1000.1L434.3 999.2L431.5 997.3L429.6 996.4L427.7 995.4L427.4 993.5L427.7 991.2L424.8 989.3L423.8 987.5ZM456.0 1010.4L457.4 1009.3L458.2 1009.9L457.2 1011.6L456.0 1011.3Z" fill="#3c79d4"/>
<path d="M466.9 1005.6L467.7 1002.8L468.6 1003.0L468.2 1005.2L467.5 1006.9Z" fill="#3c79d4"/>
<path d="M472.8 987.8L473.0 991.0L475.4 990.1L475.7 987.8L474.8 985.9L473.3 986.8Z" fill="#3f6cc0"/>
</svg>

<div class="rank" style="left:384.0px;top:741.0px;width:228.0px;height:260px">
<div class="rh"><span>国家/地区排行</span></div>
<svg class="abs" style="left:120.5px;top:21.3px" width="15" height="15" viewBox="0 0 512 512" preserveAspectRatio="none"><path fill="#727272" d="M256 512a256 256 0 1 0 0-512 256 256 0 1 0 0 512m0-336c-17.7 0-32 14.3-32 32 0 13.3-10.7 24-24 24s-24-10.7-24-24c0-44.2 35.8-80 80-80s80 35.8 80 80c0 47.2-36 67.2-56 74.5v3.8c0 13.3-10.7 24-24 24s-24-10.7-24-24v-8.1c0-20.5 14.8-35.2 30.1-40.2 6.4-2.1 13.2-5.5 18.2-10.3 4.3-4.2 7.7-10 7.7-19.6 0-17.7-14.3-32-32-32zm-32 192a32 32 0 1 1 64 0 32 32 0 1 1-64 0"/></svg>
<div class="rr" style="top:55.0px"><i class="bar"><b style="width:51.39%"></b></i><div class="cn">中国</div><div class="pc">51.39%<small>(100.7MiB)</small></div></div>
<div class="rr" style="top:140.0px"><i class="bar"><b style="width:31.13%"></b></i><div class="cn">韩国</div><div class="pc">31.13%<small>(61MiB)</small></div></div>
<div class="rr" style="top:226.0px"><i class="bar"><b style="width:9.88%"></b></i><div class="cn">美国</div><div class="pc">9.88%<small>(19.4MiB)</small></div></div>
</div>
<div class="isb" style="left:612.5px;top:741px"><svg class="abs" style="left:1.5px;top:7px" width="8" height="5" viewBox="0 0 8 5"><path d="M0 5L4 0L8 5Z" fill="#c8c8c8"/></svg><i></i></div>
<div class="ctab" style="left:663px;top:742.2px;color:#4183c4">24小时流量趋势</div>
<div class="ctab" style="left:805.2px;top:742.2px">15天流量趋势</div>
<div class="hr" style="left:663px;top:784px;width:586px"></div>
<svg class="abs" style="left:651px;top:792px;overflow:hidden" width="614" height="154" viewBox="790 930 614 154" font-family="Liberation Sans, Noto Sans CJK SC, sans-serif">
<path d="M944.0999999999999 954.4H974.5" stroke="#9dd3e8" stroke-width="2.2"/><circle cx="959.3" cy="954.4" r="5.9" fill="#fff" stroke="#9dd3e8" stroke-width="2.4"/><text x="981.8" y="959.9" font-size="14.8" fill="#333">总流量</text>
<path d="M1039.8 954.4H1070.2" stroke="#5f9fa8" stroke-width="2.2"/><circle cx="1055" cy="954.4" r="5.9" fill="#fff" stroke="#5f9fa8" stroke-width="2.4"/><text x="1076.8" y="959.9" font-size="14.8" fill="#333">缓存流量</text>
<path d="M1149.8 954.4H1180.2" stroke="#f09598" stroke-width="2.2"/><circle cx="1165" cy="954.4" r="5.9" fill="#fff" stroke="#f09598" stroke-width="2.4"/><text x="1186.9" y="959.9" font-size="14.8" fill="#333">攻击流量</text>
<path d="M863.5 988.5H1362.6" stroke="#e0e6f1" stroke-width="1"/>
<text x="853.6" y="994.3" font-size="15.5" fill="#6e7079" text-anchor="end">30M</text>
<path d="M863.5 1017.0H1362.6" stroke="#e0e6f1" stroke-width="1"/>
<text x="853.6" y="1022.8" font-size="15.5" fill="#6e7079" text-anchor="end">25M</text>
<path d="M863.5 1045.5H1362.6" stroke="#e0e6f1" stroke-width="1"/>
<text x="853.6" y="1051.3" font-size="15.5" fill="#6e7079" text-anchor="end">20M</text>
<path d="M863.5 1074.0H1362.6" stroke="#e0e6f1" stroke-width="1"/>
<text x="853.6" y="1079.8" font-size="15.5" fill="#6e7079" text-anchor="end">15M</text>
<path d="M863.5 1102.5H1362.6" stroke="#e0e6f1" stroke-width="1"/>
<text x="853.6" y="1108.3" font-size="15.5" fill="#6e7079" text-anchor="end">10M</text>
<path d="M873.9 1057.8C873.9 1057.8 882.7 1073.7 894.7 1078.4C903.5 1078.4 909.5 1078.4 915.5 1073.9C930.3 1055.2 924.7 1029.0 936.3 1025.7C945.5 1025.7 943.4 1051.9 957.1 1061.9C964.2 1061.9 967.3 1057.5 977.9 1056.0C988.1 1056.0 988.3 1056.0 998.7 1056.0C1009.1 1055.9 1011.0 1056.0 1019.5 1055.5C1031.8 1049.0 1028.4 1037.6 1040.3 1033.9C1049.2 1033.9 1050.4 1039.3 1061.1 1042.7C1071.2 1045.9 1071.8 1044.0 1081.9 1047.2C1092.6 1050.6 1093.9 1056.0 1102.7 1056.0C1114.7 1051.9 1112.1 1035.2 1123.5 1033.0C1132.9 1033.0 1139.2 1036.8 1144.3 1048.0C1160.0 1082.8 1153.7 1121.0 1165.1 1125.0C1174.5 1125.0 1176.5 1062.6 1185.9 1062.6C1197.3 1066.7 1198.3 1140.0 1206.7 1140.0C1219.1 1128.2 1209.9 1069.4 1227.5 1023.0C1230.7 1023.0 1240.9 1023.0 1248.3 1030.0C1261.7 1043.1 1258.1 1062.4 1269.1 1063.7C1278.9 1063.7 1278.0 1038.6 1289.9 1035.0C1298.8 1035.0 1300.3 1051.2 1310.7 1051.3C1321.1 1051.3 1327.7 1035.2 1331.5 1035.2C1348.5 1075.5 1352.3 1150.0 1352.3 1150.0L1352.3 1160L873.9 1160Z" fill="#9dd3e8" fill-opacity=".83"/>
<path d="M873.9 1057.8C873.9 1057.8 882.7 1073.7 894.7 1078.4C903.5 1078.4 909.5 1078.4 915.5 1073.9C930.3 1055.2 924.7 1029.0 936.3 1025.7C945.5 1025.7 943.4 1051.9 957.1 1061.9C964.2 1061.9 967.3 1057.5 977.9 1056.0C988.1 1056.0 988.3 1056.0 998.7 1056.0C1009.1 1055.9 1011.0 1056.0 1019.5 1055.5C1031.8 1049.0 1028.4 1037.6 1040.3 1033.9C1049.2 1033.9 1050.4 1039.3 1061.1 1042.7C1071.2 1045.9 1071.8 1044.0 1081.9 1047.2C1092.6 1050.6 1093.9 1056.0 1102.7 1056.0C1114.7 1051.9 1112.1 1035.2 1123.5 1033.0C1132.9 1033.0 1139.2 1036.8 1144.3 1048.0C1160.0 1082.8 1153.7 1121.0 1165.1 1125.0C1174.5 1125.0 1176.5 1062.6 1185.9 1062.6C1197.3 1066.7 1198.3 1140.0 1206.7 1140.0C1219.1 1128.2 1209.9 1069.4 1227.5 1023.0C1230.7 1023.0 1240.9 1023.0 1248.3 1030.0C1261.7 1043.1 1258.1 1062.4 1269.1 1063.7C1278.9 1063.7 1278.0 1038.6 1289.9 1035.0C1298.8 1035.0 1300.3 1051.2 1310.7 1051.3C1321.1 1051.3 1327.7 1035.2 1331.5 1035.2C1348.5 1075.5 1352.3 1150.0 1352.3 1150.0" fill="none" stroke="#9dd3e8" stroke-width="2"/>
<circle cx="873.9" cy="1057.8" r="2.6" fill="#fff" stroke="#9dd3e8" stroke-width="1.3"/>
<circle cx="894.7" cy="1078.4" r="2.6" fill="#fff" stroke="#9dd3e8" stroke-width="1.3"/>
<circle cx="915.5" cy="1073.9" r="2.6" fill="#fff" stroke="#9dd3e8" stroke-width="1.3"/>
<circle cx="936.3" cy="1025.7" r="2.6" fill="#fff" stroke="#9dd3e8" stroke-width="1.3"/>
<circle cx="957.1" cy="1061.9" r="2.6" fill="#fff" stroke="#9dd3e8" stroke-width="1.3"/>
<circle cx="977.9" cy="1056.0" r="2.6" fill="#fff" stroke="#9dd3e8" stroke-width="1.3"/>
<circle cx="998.7" cy="1056.0" r="2.6" fill="#fff" stroke="#9dd3e8" stroke-width="1.3"/>
<circle cx="1019.5" cy="1055.5" r="2.6" fill="#fff" stroke="#9dd3e8" stroke-width="1.3"/>
<circle cx="1040.3" cy="1033.9" r="2.6" fill="#fff" stroke="#9dd3e8" stroke-width="1.3"/>
<circle cx="1061.1" cy="1042.7" r="2.6" fill="#fff" stroke="#9dd3e8" stroke-width="1.3"/>
<circle cx="1081.9" cy="1047.2" r="2.6" fill="#fff" stroke="#9dd3e8" stroke-width="1.3"/>
<circle cx="1102.7" cy="1056.0" r="2.6" fill="#fff" stroke="#9dd3e8" stroke-width="1.3"/>
<circle cx="1123.5" cy="1033.0" r="2.6" fill="#fff" stroke="#9dd3e8" stroke-width="1.3"/>
<circle cx="1144.3" cy="1048.0" r="2.6" fill="#fff" stroke="#9dd3e8" stroke-width="1.3"/>
<circle cx="1185.9" cy="1062.6" r="2.6" fill="#fff" stroke="#9dd3e8" stroke-width="1.3"/>
<circle cx="1227.5" cy="1023.0" r="2.6" fill="#fff" stroke="#9dd3e8" stroke-width="1.3"/>
<circle cx="1248.3" cy="1030.0" r="2.6" fill="#fff" stroke="#9dd3e8" stroke-width="1.3"/>
<circle cx="1269.1" cy="1063.7" r="2.6" fill="#fff" stroke="#9dd3e8" stroke-width="1.3"/>
<circle cx="1289.9" cy="1035.0" r="2.6" fill="#fff" stroke="#9dd3e8" stroke-width="1.3"/>
<circle cx="1310.7" cy="1051.3" r="2.6" fill="#fff" stroke="#9dd3e8" stroke-width="1.3"/>
<circle cx="1331.5" cy="1035.2" r="2.6" fill="#fff" stroke="#9dd3e8" stroke-width="1.3"/>
</svg>
<div class="wm" style="left:934.5px;top:852.5px">知乎 <span class="at">@</span>源码屋<span class="org">org</span></div>

</div>
<div id="sb"><i></i><b class="up"></b><b class="dn"></b></div>
</div>
</body>
</html>
